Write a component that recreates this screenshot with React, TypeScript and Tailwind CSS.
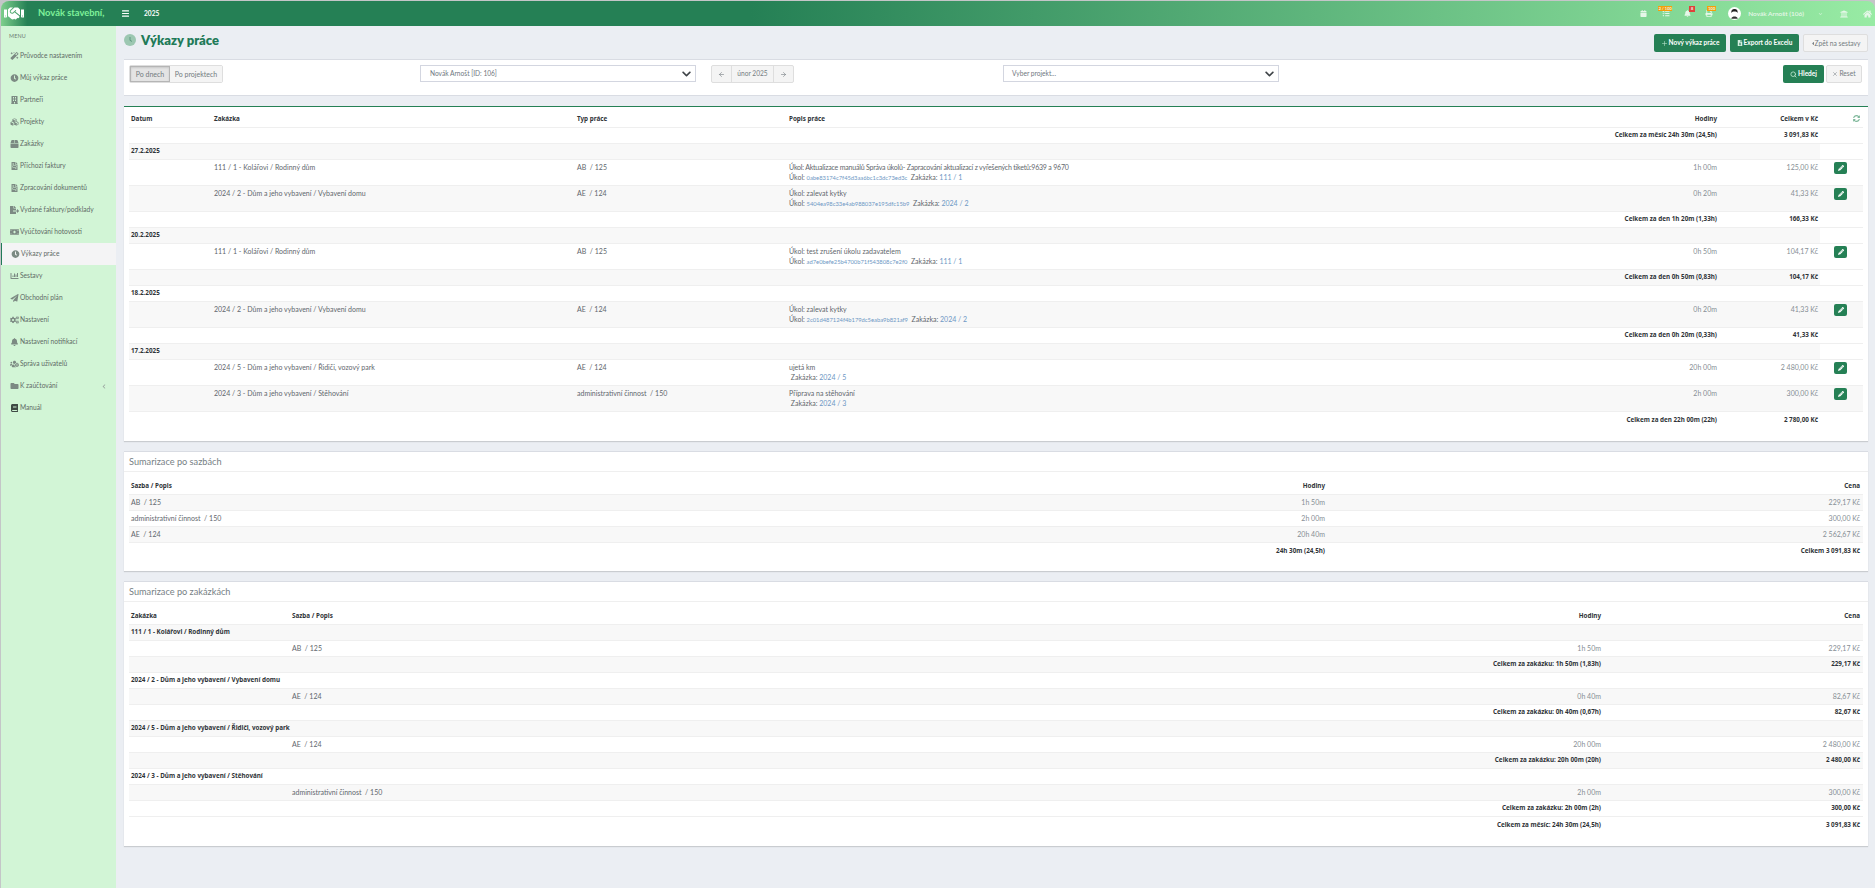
import React from "react";
import { ArrowLeft, ArrowRight, Menu, Plus, Search, X } from "lucide-react";
import {
  FaMagic,
  FaClock,
  FaBuilding,
  FaCubes,
  FaBox,
  FaFileInvoice,
  FaFileExport,
  FaMoneyBill,
  FaChartBar,
  FaPaperPlane,
  FaCogs,
  FaBell,
  FaUsersCog,
  FaFolder,
  FaBook,
  FaPencilAlt,
  FaSyncAlt,
  FaChevronDown,
  FaChevronLeft,
  FaCalendar,
  FaTasks,
  FaPrint,
  FaUniversity,
  FaHome,
  FaHandshake,
  FaFileExcel,
  FaCaretLeft,
} from "react-icons/fa";

const menu = [
  { icon: FaMagic, label: "Průvodce nastavením" },
  { icon: FaClock, label: "Můj výkaz práce" },
  { icon: FaBuilding, label: "Partneři" },
  { icon: FaCubes, label: "Projekty" },
  { icon: FaBox, label: "Zakázky" },
  { icon: FaFileInvoice, label: "Příchozí faktury" },
  { icon: FaFileInvoice, label: "Zpracování dokumentů" },
  { icon: FaFileExport, label: "Vydané faktury/podklady" },
  { icon: FaMoneyBill, label: "Vyúčtování hotovosti" },
  { icon: FaClock, label: "Výkazy práce", active: true },
  { icon: FaChartBar, label: "Sestavy" },
  { icon: FaPaperPlane, label: "Obchodní plán" },
  { icon: FaCogs, label: "Nastavení" },
  { icon: FaBell, label: "Nastavení notifikací" },
  { icon: FaUsersCog, label: "Správa uživatelů" },
  { icon: FaFolder, label: "K zaúčtování", caret: true },
  { icon: FaBook, label: "Manuál", dark: true },
];

type WorkRow =
  | { kind: "total"; hours: string; price: string }
  | { kind: "date"; date: string }
  | {
      kind: "work";
      job: string;
      type: string;
      title: string;
      hash?: string;
      jobLink: string;
      hours: string;
      price: string;
    };

const workRows: WorkRow[] = [
  { kind: "total", hours: "Celkem za měsíc 24h 30m (24,5h)", price: "3 091,83 Kč" },
  { kind: "date", date: "27.2.2025" },
  {
    kind: "work",
    job: "111 / 1 - Kolářovi / Rodinný dům",
    type: "AB  / 125",
    title: "Úkol: Aktualizace manuálů Správa úkolů- Zapracování aktualizací z vyřešených tiketů:9639 a 9670",
    hash: "0abe83174c7f45d3aa6bc1c3dc73ed3c",
    jobLink: "111 / 1",
    hours: "1h 00m",
    price: "125,00 Kč",
  },
  {
    kind: "work",
    job: "2024 / 2 - Dům a jeho vybavení / Vybavení domu",
    type: "AE  / 124",
    title: "Úkol: zalevat kytky",
    hash: "5404ea98c33e4ab988037e195dfc15b9",
    jobLink: "2024 / 2",
    hours: "0h 20m",
    price: "41,33 Kč",
  },
  { kind: "total", hours: "Celkem za den 1h 20m (1,33h)", price: "166,33 Kč" },
  { kind: "date", date: "20.2.2025" },
  {
    kind: "work",
    job: "111 / 1 - Kolářovi / Rodinný dům",
    type: "AB  / 125",
    title: "Úkol: test zrušení úkolu zadavatelem",
    hash: "ad7e0befe25b4700b71f543808c7e2f0",
    jobLink: "111 / 1",
    hours: "0h 50m",
    price: "104,17 Kč",
  },
  { kind: "total", hours: "Celkem za den 0h 50m (0,83h)", price: "104,17 Kč" },
  { kind: "date", date: "18.2.2025" },
  {
    kind: "work",
    job: "2024 / 2 - Dům a jeho vybavení / Vybavení domu",
    type: "AE  / 124",
    title: "Úkol: zalevat kytky",
    hash: "2c01d487124f4b179dc5eaba9b821af9",
    jobLink: "2024 / 2",
    hours: "0h 20m",
    price: "41,33 Kč",
  },
  { kind: "total", hours: "Celkem za den 0h 20m (0,33h)", price: "41,33 Kč" },
  { kind: "date", date: "17.2.2025" },
  {
    kind: "work",
    job: "2024 / 5 - Dům a jeho vybavení / Řidiči, vozový park",
    type: "AE  / 124",
    title: "ujetá km",
    jobLink: "2024 / 5",
    hours: "20h 00m",
    price: "2 480,00 Kč",
  },
  {
    kind: "work",
    job: "2024 / 3 - Dům a jeho vybavení / Stěhování",
    type: "administrativní činnost  / 150",
    title: "Příprava na stěhování",
    jobLink: "2024 / 3",
    hours: "2h 00m",
    price: "300,00 Kč",
  },
  { kind: "total", hours: "Celkem za den 22h 00m (22h)", price: "2 780,00 Kč" },
];

const rateRows = [
  ["AB  / 125", "1h 50m", "229,17 Kč"],
  ["administrativní činnost  / 150", "2h 00m", "300,00 Kč"],
  ["AE  / 124", "20h 40m", "2 562,67 Kč"],
];

const jobGroups = [
  { name: "111 / 1 - Kolářovi / Rodinný dům", rate: "AB  / 125", hours: "1h 50m", price: "229,17 Kč", total: "Celkem za zakázku: 1h 50m (1,83h)" },
  { name: "2024 / 2 - Dům a jeho vybavení / Vybavení domu", rate: "AE  / 124", hours: "0h 40m", price: "82,67 Kč", total: "Celkem za zakázku: 0h 40m (0,67h)" },
  { name: "2024 / 5 - Dům a jeho vybavení / Řidiči, vozový park", rate: "AE  / 124", hours: "20h 00m", price: "2 480,00 Kč", total: "Celkem za zakázku: 20h 00m (20h)" },
  { name: "2024 / 3 - Dům a jeho vybavení / Stěhování", rate: "administrativní činnost  / 150", hours: "2h 00m", price: "300,00 Kč", total: "Celkem za zakázku: 2h 00m (2h)" },
];

// bold table text in the reference runs wider than Lato bold
const strong = "font-['Noto_Sans'] text-[6.3px] font-bold text-[#2f3438]";

function Sidebar() {
  return (
    <aside className="w-[115px] shrink-0 bg-[#d2f5d6] pt-[3px] text-[6.65px] text-[#5f6b66]">
      <div className="h-[16px] pl-[8px] text-[5.4px] leading-[14px] tracking-wide text-[#6d7d75]">MENU</div>
      {menu.map((item) => (
        <div
          key={item.label}
          className={`flex h-[22px] items-center pl-[9px] ${item.active ? "border-l border-[#217a58] bg-[#f4f4f5] pl-[8px]" : ""}`}
        >
          <item.icon className={`mr-[1px] h-[8px] w-[9px] shrink-0 ${item.dark ? "text-[#3f4a45]" : "text-[#7c8a83]"}`} />
          <span className="whitespace-pre">{item.label}</span>
          {item.caret && <FaChevronLeft className="ml-auto mr-[10px] h-[5px] w-[4px] text-[#9aa5a0]" />}
        </div>
      ))}
    </aside>
  );
}

function Header() {
  return (
    <header className="flex h-[25px] shrink-0 items-center rounded-t-[8px] bg-[linear-gradient(to_right,#7ecf8c_0%,#258055_1.4%,#258055_40%,#98eba4_100%)] text-white">
      <div className="flex w-[115px] items-center">
        <FaHandshake className="ml-[3px] h-[19px] w-[20px] text-white" />
        <span className="ml-[14px] text-[9.4px] font-bold text-[#7ff09a]">Novák stavební,</span>
      </div>
      <Menu className="ml-[5px] h-[9px] w-[9px]" strokeWidth={3} />
      <span className="ml-[14px] text-[6.6px] font-bold">2025</span>
      <div className="ml-auto flex items-center text-[#e6f7e9]">
        <FaCalendar className="mr-[15px] h-[7px] w-[7px]" />
        <div className="relative mr-[14px]">
          <FaTasks className="h-[7px] w-[8px]" />
          <span className="absolute -left-[4px] -top-[4px] h-[5px] w-[14px] bg-[#f59f0b] text-center text-[4px] font-bold leading-[5px]">2 / 100</span>
        </div>
        <div className="relative mr-[14px]">
          <FaBell className="h-[7px] w-[7px]" />
          <span className="absolute -right-[4px] -top-[4px] h-[6px] w-[6px] bg-[#e0413a] text-center text-[4px] font-bold leading-[6px]">8</span>
        </div>
        <div className="relative mr-[15px]">
          <FaPrint className="h-[7px] w-[8px]" />
          <span className="absolute -right-[3px] -top-[4px] h-[5px] w-[9px] bg-[#f59f0b] text-center text-[4px] font-bold leading-[5px]">100</span>
        </div>
        <svg viewBox="0 0 14 14" className="mr-[7px] h-[13px] w-[13px]">
          <circle cx="7" cy="7" r="7" fill="#fff" />
          <path d="M3.6 6.4C3.4 3 5 2.2 7 2.2s3.6.8 3.4 4.2C9.600 5 8.500 4.800 7 4.800S4.400 5 3.600 6.400Z" fill="#222" />
          <path d="M3.500 12.600c.6-1.800 2-2.300 3.500-2.300s2.900.5 3.500 2.300" fill="#333" />
        </svg>
        <span className="text-[6.5px] font-semibold">Novák Arnošt (106)</span>
        <FaChevronDown className="ml-[14px] mr-[17px] h-[4px] w-[5px] text-[#c8f3cf]" />
        <FaUniversity className="mr-[15px] h-[8px] w-[8px]" />
        <FaHome className="mr-[3px] h-[8px] w-[9px]" />
      </div>
    </header>
  );
}

function GreenButton({ children }: { children: React.ReactNode }) {
  return (
    <button className="flex h-[18px] items-center justify-center gap-[1px] rounded-[2px] bg-[#258055] text-[6.5px] font-bold text-white">
      {children}
    </button>
  );
}

function SelectBox({ label, className }: { label: string; className: string }) {
  return (
    <div className={`flex h-[17px] items-center justify-between border border-[#d3d6e0] bg-white text-[6.6px] text-[#6f7780] ${className}`}>
      <span>{label}</span>
      <FaChevronDown className="mr-[4px] h-[10px] w-[9px] text-[#3f4448]" />
    </div>
  );
}

function FilterCard() {
  return (
    <section className="flex h-[37px] items-start border-y border-[#d9dce3] bg-white pl-[5px] pr-[6px] pt-[5px]">
      <div className="flex h-[18px] w-[94px] rounded-[2px] border border-[#dedede] text-[7px] text-[#737b80]">
        <span className="flex w-[40px] items-center justify-center border border-[#b5b5b5] bg-[#e4e4e4] shadow-[inset_0_1px_2px_rgba(0,0,0,0.12)]">Po dnech</span>
        <span className="flex flex-1 items-center justify-center bg-[#f4f4f4]">Po projektech</span>
      </div>
      <SelectBox label="Novák Arnošt [ID: 106]" className="ml-[197px] w-[276px] pl-[9px]" />
      <div className="ml-[15px] flex h-[18px] w-[83px] rounded-[2px] border border-[#dedede] bg-[#f4f4f4] text-[6.6px] text-[#737b80]">
        <span className="flex w-[20px] items-center justify-center border-r border-[#dedede]"><ArrowLeft className="h-[7px] w-[7px]" /></span>
        <span className="flex flex-1 items-center justify-center border-r border-[#dedede]">únor 2025</span>
        <span className="flex w-[19px] items-center justify-center"><ArrowRight className="h-[7px] w-[7px]" /></span>
      </div>
      <SelectBox label="Vyber projekt..." className="ml-[209px] w-[276px] pl-[8px]" />
      <div className="ml-auto flex gap-[2px]">
        <div className="w-[41px]">
          <GreenButton><span className="flex w-[41px] items-center justify-center gap-[1px]"><Search className="h-[7px] w-[7px] text-[#b9e2cd]" strokeWidth={3} />Hledej</span></GreenButton>
        </div>
        <button className="flex h-[18px] w-[36px] items-center justify-center gap-[1px] rounded-[2px] border border-[#dedede] bg-[#f4f4f4] text-[6.6px] text-[#737b80]">
          <X className="h-[6px] w-[6px]" />Reset
        </button>
      </div>
    </section>
  );
}

function WorkTable() {
  return (
    <section className="mt-[10px] border-t border-[#258055] bg-white pb-[14px] pl-[5px] pr-[5px] shadow-[0_1px_1px_rgba(0,0,0,0.14)]">
      <table className="w-[1734px] table-fixed border-collapse text-[7px] text-[#5f676d]">
        <colgroup>
          <col className="w-[83px]" />
          <col className="w-[363px]" />
          <col className="w-[212px]" />
          <col className="w-[713px]" />
          <col className="w-[219px]" />
          <col className="w-[101px]" />
          <col className="w-[43px]" />
        </colgroup>
        <thead>
          <tr className={`h-[20px] border-b border-[#efefef] ${strong}`}>
            <td className="px-[2px] pt-[3px]">Datum</td>
            <td className="px-[2px] pt-[3px]">Zakázka</td>
            <td className="px-[2px] pt-[3px]">Typ práce</td>
            <td className="px-[2px] pt-[3px]">Popis práce</td>
            <td className="px-[2px] pt-[3px] text-right">Hodiny</td>
            <td className="px-[2px] pt-[3px] text-right">Celkem v Kč</td>
            <td className="pr-[3px] pt-[3px] text-right"><FaSyncAlt className="ml-auto h-[7px] w-[7px] text-[#7fb89b]" /></td>
          </tr>
        </thead>
        <tbody>
          {workRows.map((row, i) => {
            const stripe = i % 2 === 1 ? "bg-[#f8f8f8]" : "";
            if (row.kind === "date") {
              return (
                <tr key={i} className="h-[16px] border-b border-[#efefef]">
                  <td colSpan={6} className={`px-[2px] ${strong} ${stripe}`}>{row.date}</td>
                  <td />
                </tr>
              );
            }
            if (row.kind === "total") {
              return (
                <tr key={i} className={`h-[16px] ${strong} ${i === workRows.length - 1 ? "" : "border-b border-[#efefef]"}`}>
                  <td colSpan={5} className={`px-[2px] text-right ${stripe}`}>{row.hours}</td>
                  <td className={`px-[2px] text-right ${stripe}`}>{row.price}</td>
                  <td />
                </tr>
              );
            }
            return (
              <tr key={i} className={`h-[26px] border-b border-[#efefef] align-top ${stripe}`}>
                <td />
                <td className="px-[2px] pt-[2px] leading-[10px]">{row.job}</td>
                <td className="whitespace-pre px-[2px] pt-[2px] leading-[10px]">{row.type}</td>
                <td className="px-[2px] pt-[2px] leading-[10px]">
                  <div className={row.title.length > 60 ? "tracking-[-0.2px]" : ""}>{row.title}</div>
                  <div>
                    {row.hash ? (
                      <>
                        Úkol: <span className="text-[5.8px] text-[#6d97c4]">{row.hash}</span>{" "}
                      </>
                    ) : null}
                    <span className="whitespace-pre"> Zakázka: </span>
                    <span className="text-[#6d97c4]">{row.jobLink}</span>
                  </div>
                </td>
                <td className="px-[2px] pt-[2px] text-right leading-[10px] text-[#868e94]">{row.hours}</td>
                <td className="px-[2px] pt-[2px] text-right leading-[10px] text-[#868e94]">{row.price}</td>
                <td className="pt-[2px]">
                  <button className="ml-[14px] flex h-[12px] w-[13px] items-center justify-center rounded-[2px] bg-[#258055]">
                    <FaPencilAlt className="h-[6px] w-[6px] text-white" />
                  </button>
                </td>
              </tr>
            );
          })}
        </tbody>
      </table>
    </section>
  );
}

function CardTitle({ children }: { children: React.ReactNode }) {
  return (
    <div className="flex h-[20px] items-center border-b border-[#efefef] pl-[5px] text-[9.2px] text-[#777f85]">{children}</div>
  );
}

function RateSummary() {
  return (
    <section className="mt-[10px] border-t border-[#d9dce3] bg-white pb-[13px] shadow-[0_1px_1px_rgba(0,0,0,0.14)]">
      <CardTitle>Sumarizace po sazbách</CardTitle>
      <div className="px-[5px]">
        <table className="w-full table-fixed border-collapse text-[7px] text-[#5f676d]">
          <colgroup>
            <col className="w-[798px]" />
            <col className="w-[400px]" />
            <col />
          </colgroup>
          <thead>
            <tr className={`h-[22px] border-b border-[#efefef] ${strong}`}>
              <td className="px-[2px] pt-[5px]">Sazba / Popis</td>
              <td className="px-[2px] pt-[5px] text-right">Hodiny</td>
              <td className="px-[3px] pt-[5px] text-right">Cena</td>
            </tr>
          </thead>
          <tbody>
            {rateRows.map((r, i) => (
              <tr key={i} className={`h-[16px] border-b border-[#efefef] ${i % 2 === 0 ? "bg-[#f8f8f8]" : ""}`}>
                <td className="whitespace-pre px-[2px]">{r[0]}</td>
                <td className="px-[2px] text-right text-[#868e94]">{r[1]}</td>
                <td className="px-[3px] text-right text-[#868e94]">{r[2]}</td>
              </tr>
            ))}
            <tr className={`h-[16px] ${strong}`}>
              <td />
              <td className="px-[2px] text-right">24h 30m (24,5h)</td>
              <td className="px-[3px] text-right">Celkem 3 091,83 Kč</td>
            </tr>
          </tbody>
        </table>
      </div>
    </section>
  );
}

function JobSummary() {
  return (
    <section className="mt-[10px] border-t border-[#d9dce3] bg-white pb-[14px] shadow-[0_1px_1px_rgba(0,0,0,0.14)]">
      <CardTitle>Sumarizace po zakázkách</CardTitle>
      <div className="px-[5px]">
        <table className="w-full table-fixed border-collapse text-[7px] text-[#5f676d]">
          <colgroup>
            <col className="w-[161px]" />
            <col className="w-[1148px]" />
            <col className="w-[165px]" />
            <col />
          </colgroup>
          <thead>
            <tr className={`h-[22px] border-b border-[#efefef] ${strong}`}>
              <td className="px-[2px] pt-[5px]">Zakázka</td>
              <td className="px-[2px] pt-[5px]">Sazba / Popis</td>
              <td className="px-[2px] pt-[5px] text-right">Hodiny</td>
              <td className="px-[3px] pt-[5px] text-right">Cena</td>
            </tr>
          </thead>
          <tbody>
            {jobGroups.map((g, gi) => (
              <React.Fragment key={g.name}>
                <tr className={`h-[16px] border-b border-[#efefef] ${strong} ${gi % 2 === 0 ? "bg-[#f8f8f8]" : ""}`}>
                  <td colSpan={4} className="px-[2px]">{g.name}</td>
                </tr>
                <tr className={`h-[16px] border-b border-[#efefef] ${gi % 2 === 1 ? "bg-[#f8f8f8]" : ""}`}>
                  <td />
                  <td className="whitespace-pre px-[2px]">{g.rate}</td>
                  <td className="px-[2px] text-right text-[#868e94]">{g.hours}</td>
                  <td className="px-[3px] text-right text-[#868e94]">{g.price}</td>
                </tr>
                <tr className={`h-[16px] border-b border-[#efefef] ${strong} ${gi % 2 === 0 ? "bg-[#f8f8f8]" : ""}`}>
                  <td colSpan={3} className="px-[2px] text-right">{g.total}</td>
                  <td className="px-[3px] text-right">{g.price}</td>
                </tr>
              </React.Fragment>
            ))}
            <tr className={`h-[16px] ${strong}`}>
              <td colSpan={3} className="px-[2px] text-right">Celkem za měsíc: 24h 30m (24,5h)</td>
              <td className="px-[3px] text-right">3 091,83 Kč</td>
            </tr>
          </tbody>
        </table>
      </div>
    </section>
  );
}

export default function App() {
  return (
    <div
      className="flex h-[888px] flex-col overflow-hidden bg-[#c4c6c8] pl-px pt-px"
      style={{ fontFamily: 'Lato, "Noto Sans", sans-serif' }}
    >
      <Header />
      <div className="flex flex-1">
        <Sidebar />
        <main className="flex-1 bg-[#ebeef3] pl-[8px] pr-[7px]">
          <div className="flex h-[33px] items-start">
            <div className="mt-[7px] flex items-center">
              <svg viewBox="0 0 12 12" className="h-[12px] w-[12px]">
                <circle cx="6" cy="6" r="6" fill="#9cc7b1" />
                <path d="M6 3v3.400l2 1" fill="none" stroke="#4f8f73" strokeWidth="0.8" />
              </svg>
              <h1 className="ml-[5px] text-[13px] font-extrabold leading-[14px] text-[#217a58]">Výkazy práce</h1>
            </div>
            <div className="ml-auto mt-[8px] flex gap-[4px]">
              <div className="w-[72px]">
                <GreenButton><span className="flex w-[72px] items-center justify-center gap-[1px]"><Plus className="h-[7px] w-[7px] text-[#b9e2cd]" />Nový výkaz práce</span></GreenButton>
              </div>
              <div className="w-[69px]">
                <GreenButton><span className="flex w-[69px] items-center justify-center gap-[1px]"><FaFileExcel className="h-[6px] w-[6px] text-[#d7efe2]" />Export do Excelu</span></GreenButton>
              </div>
              <button className="flex h-[18px] w-[65px] items-center justify-center rounded-[2px] border border-[#dedede] bg-[#f4f4f4] text-[6.7px] text-[#737b80]">
                <FaCaretLeft className="h-[5px] w-[4px]" />Zpět na sestavy
              </button>
            </div>
          </div>
          <FilterCard />
          <WorkTable />
          <RateSummary />
          <JobSummary />
        </main>
      </div>
    </div>
  );
}
